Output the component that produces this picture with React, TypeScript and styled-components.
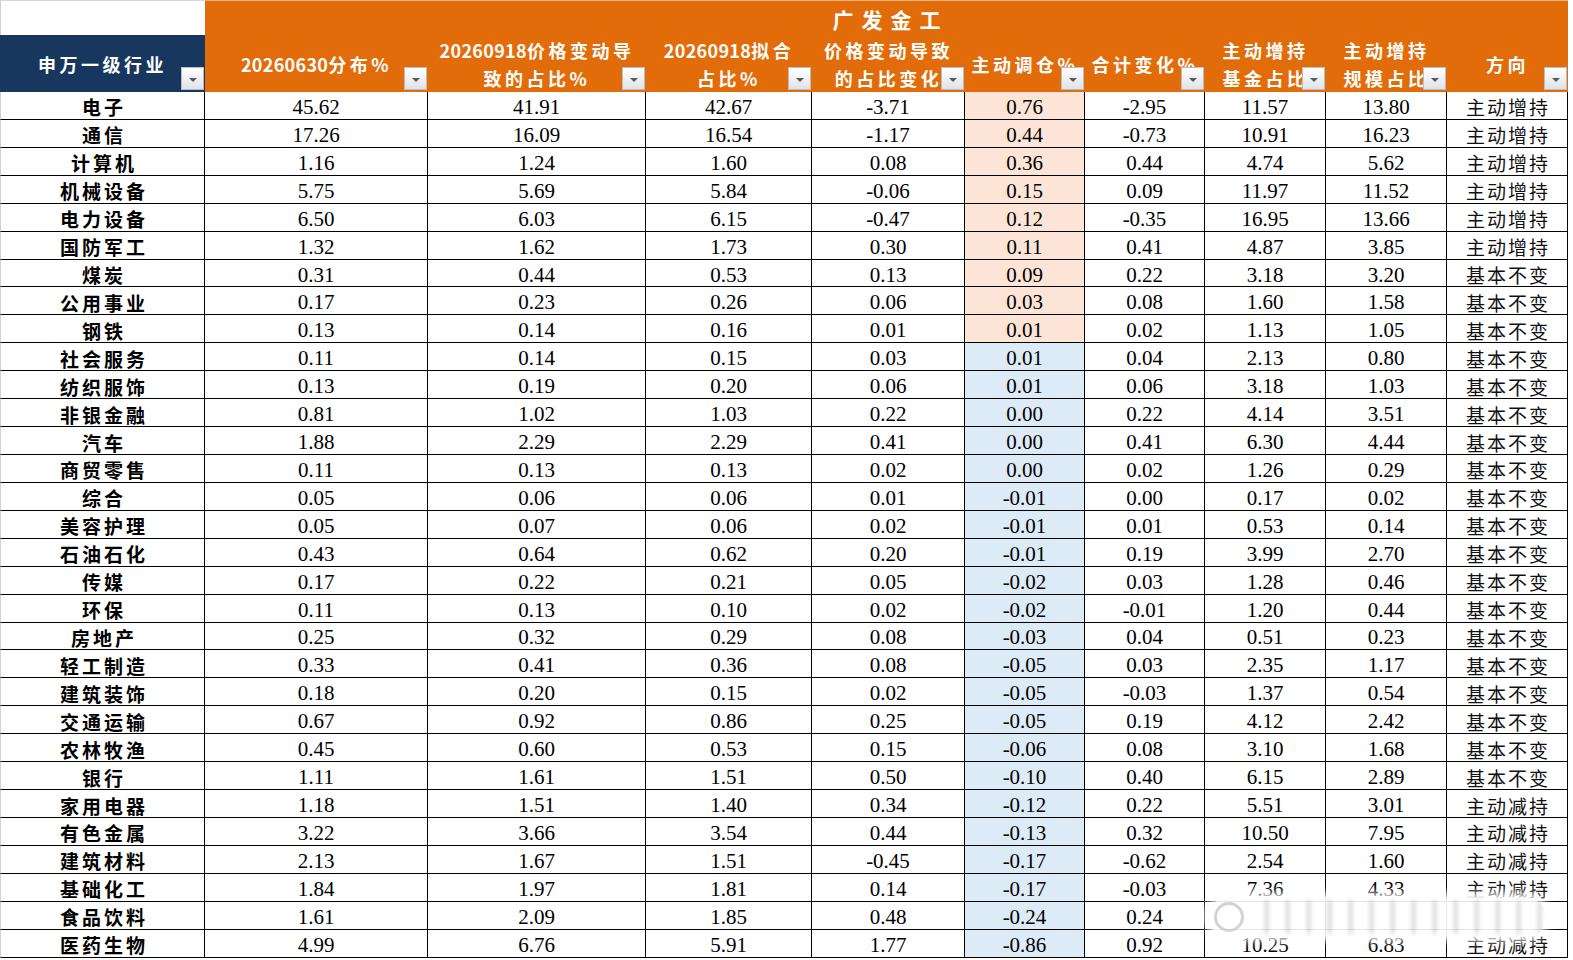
import React from "react";
import styled, { createGlobalStyle } from "styled-components";

const GlobalStyle = createGlobalStyle`
  html, body {
    margin: 0;
    padding: 0;
    background: #ffffff;
  }
  * {
    box-sizing: border-box;
  }
`;

const COLORS = {
  orange: "#e36c0a",
  navy: "#17375e",
  peach: "#fce4d6",
  blue: "#ddebf7",
  line: "#000000",
};

const CJK = `"Noto Sans CJK SC", "Noto Sans", sans-serif`;
const NUM = `"Liberation Serif", "Noto Sans CJK SC", serif`;

const Page = styled.div`
  position: relative;
  width: 1573px;
  height: 960px;
  overflow: hidden;
  background: #ffffff;
`;

const Sheet = styled.div`
  display: grid;
  grid-template-columns: 205px 223px 218px 166px 153px 120px 120px 121px 121px 121px;
  grid-template-rows: 35px 57px repeat(31, 27.93px);
`;

const BlankCorner = styled.div`
  background: #ffffff;
  border-top: 1px solid #d8d8d8;
  border-left: 1px solid #d0d0d0;
`;

const TitleCell = styled.div`
  grid-column: 2 / span 9;
  background: ${COLORS.orange};
  border-top: 1px solid #f2b27a;
  display: flex;
  align-items: center;
  justify-content: center;
  color: #ffffff;
  font-family: ${CJK};
  font-weight: 700;
  font-size: 21px;
  letter-spacing: 8px;
  padding-left: 8px;
  padding-top: 1px;
`;

const HeadCell = styled.div<{ $navy?: boolean }>`
  position: relative;
  background: ${(p) => (p.$navy ? COLORS.navy : COLORS.orange)};
  display: flex;
  flex-direction: column;
  align-items: center;
  justify-content: center;
  color: #ffffff;
  font-family: ${CJK};
  font-weight: 700;
  font-size: 18px;
  line-height: 28px;
  letter-spacing: 3.5px;
  white-space: nowrap;
  padding-top: 1px;
`;

const HeadLine = styled.span`
  display: block;
`;

const Digits = styled.span`
  letter-spacing: 0.3px;
`;

const FilterButton = styled.div`
  position: absolute;
  right: 1px;
  bottom: 2px;
  width: 23px;
  height: 23px;
  background: linear-gradient(#ffffff, #dfe3e8);
  border: 1px solid #b9bec6;
  display: flex;
  align-items: center;
  justify-content: center;
  &::after {
    content: "";
    border-left: 4px solid transparent;
    border-right: 4px solid transparent;
    border-top: 4px solid #5a5a5a;
    margin-top: 2px;
  }
`;

const Cell = styled.div<{ $fill?: string }>`
  display: flex;
  align-items: center;
  justify-content: center;
  background: ${(p) => p.$fill || "#ffffff"};
  border-right: 1px solid ${COLORS.line};
  border-bottom: 1px solid ${COLORS.line};
  color: #000000;
  font-family: ${NUM};
  font-size: 21px;
  white-space: nowrap;
  padding-top: 4px;
`;

const NameCell = styled(Cell)`
  border-left: 1px solid #d0d0d0;
  font-family: ${CJK};
  font-weight: 700;
  font-size: 19px;
  letter-spacing: 3px;
  padding-left: 3px;
  padding-top: 3px;
`;

const DirCell = styled(Cell)`
  font-family: ${CJK};
  font-weight: 400;
  font-size: 19px;
  letter-spacing: 2px;
  padding-left: 2px;
  padding-top: 3px;
  color: #111111;
`;

const Watermark = styled.div`
  position: absolute;
  left: 1208px;
  top: 897px;
  width: 338px;
  height: 40px;
  border-radius: 20px;
  background: rgba(255, 255, 255, 0.9);
  box-shadow: 0 0 8px 4px rgba(255, 255, 255, 0.9);
  overflow: hidden;
  display: flex;
  align-items: center;
  gap: 12px;
  padding-left: 6px;
`;

const WatermarkLogo = styled.div`
  width: 30px;
  height: 30px;
  border-radius: 50%;
  border: 3px solid rgba(200, 200, 200, 0.8);
  flex-shrink: 0;
`;

const WatermarkText = styled.div`
  flex: 1;
  height: 34px;
  filter: blur(2px);
  background: repeating-linear-gradient(
    90deg,
    rgba(255, 255, 255, 0) 0px,
    rgba(255, 255, 255, 0) 9px,
    rgba(90, 90, 90, 0.45) 10px,
    rgba(255, 255, 255, 0) 13px,
    rgba(255, 255, 255, 0) 21px
  );
`;

type Row = [string, string, string, string, string, string, string, string, string, string];

const rows: Row[] = [
  ["电子", "45.62", "41.91", "42.67", "-3.71", "0.76", "-2.95", "11.57", "13.80", "主动增持"],
  ["通信", "17.26", "16.09", "16.54", "-1.17", "0.44", "-0.73", "10.91", "16.23", "主动增持"],
  ["计算机", "1.16", "1.24", "1.60", "0.08", "0.36", "0.44", "4.74", "5.62", "主动增持"],
  ["机械设备", "5.75", "5.69", "5.84", "-0.06", "0.15", "0.09", "11.97", "11.52", "主动增持"],
  ["电力设备", "6.50", "6.03", "6.15", "-0.47", "0.12", "-0.35", "16.95", "13.66", "主动增持"],
  ["国防军工", "1.32", "1.62", "1.73", "0.30", "0.11", "0.41", "4.87", "3.85", "主动增持"],
  ["煤炭", "0.31", "0.44", "0.53", "0.13", "0.09", "0.22", "3.18", "3.20", "基本不变"],
  ["公用事业", "0.17", "0.23", "0.26", "0.06", "0.03", "0.08", "1.60", "1.58", "基本不变"],
  ["钢铁", "0.13", "0.14", "0.16", "0.01", "0.01", "0.02", "1.13", "1.05", "基本不变"],
  ["社会服务", "0.11", "0.14", "0.15", "0.03", "0.01", "0.04", "2.13", "0.80", "基本不变"],
  ["纺织服饰", "0.13", "0.19", "0.20", "0.06", "0.01", "0.06", "3.18", "1.03", "基本不变"],
  ["非银金融", "0.81", "1.02", "1.03", "0.22", "0.00", "0.22", "4.14", "3.51", "基本不变"],
  ["汽车", "1.88", "2.29", "2.29", "0.41", "0.00", "0.41", "6.30", "4.44", "基本不变"],
  ["商贸零售", "0.11", "0.13", "0.13", "0.02", "0.00", "0.02", "1.26", "0.29", "基本不变"],
  ["综合", "0.05", "0.06", "0.06", "0.01", "-0.01", "0.00", "0.17", "0.02", "基本不变"],
  ["美容护理", "0.05", "0.07", "0.06", "0.02", "-0.01", "0.01", "0.53", "0.14", "基本不变"],
  ["石油石化", "0.43", "0.64", "0.62", "0.20", "-0.01", "0.19", "3.99", "2.70", "基本不变"],
  ["传媒", "0.17", "0.22", "0.21", "0.05", "-0.02", "0.03", "1.28", "0.46", "基本不变"],
  ["环保", "0.11", "0.13", "0.10", "0.02", "-0.02", "-0.01", "1.20", "0.44", "基本不变"],
  ["房地产", "0.25", "0.32", "0.29", "0.08", "-0.03", "0.04", "0.51", "0.23", "基本不变"],
  ["轻工制造", "0.33", "0.41", "0.36", "0.08", "-0.05", "0.03", "2.35", "1.17", "基本不变"],
  ["建筑装饰", "0.18", "0.20", "0.15", "0.02", "-0.05", "-0.03", "1.37", "0.54", "基本不变"],
  ["交通运输", "0.67", "0.92", "0.86", "0.25", "-0.05", "0.19", "4.12", "2.42", "基本不变"],
  ["农林牧渔", "0.45", "0.60", "0.53", "0.15", "-0.06", "0.08", "3.10", "1.68", "基本不变"],
  ["银行", "1.11", "1.61", "1.51", "0.50", "-0.10", "0.40", "6.15", "2.89", "基本不变"],
  ["家用电器", "1.18", "1.51", "1.40", "0.34", "-0.12", "0.22", "5.51", "3.01", "主动减持"],
  ["有色金属", "3.22", "3.66", "3.54", "0.44", "-0.13", "0.32", "10.50", "7.95", "主动减持"],
  ["建筑材料", "2.13", "1.67", "1.51", "-0.45", "-0.17", "-0.62", "2.54", "1.60", "主动减持"],
  ["基础化工", "1.84", "1.97", "1.81", "0.14", "-0.17", "-0.03", "7.36", "4.33", "主动减持"],
  ["食品饮料", "1.61", "2.09", "1.85", "0.48", "-0.24", "0.24", "", "", ""],
  ["医药生物", "4.99", "6.76", "5.91", "1.77", "-0.86", "0.92", "10.25", "6.83", "主动减持"],
];

const headers: string[][] = [
  ["申万一级行业"],
  ["20260630分布%"],
  ["20260918价格变动导", "致的占比%"],
  ["20260918拟合", "占比%"],
  ["价格变动导致", "的占比变化"],
  ["主动调仓%"],
  ["合计变化%"],
  ["主动增持", "基金占比"],
  ["主动增持", "规模占比"],
  ["方向"],
];

// digits in the header are not spaced out like the Chinese characters
const renderHeadText = (text: string) =>
  text.split(/(\d+)/).map((part, i) =>
    /^\d+$/.test(part) ? <Digits key={i}>{part}</Digits> : <React.Fragment key={i}>{part}</React.Fragment>
  );

export default function App() {
  return (
    <Page>
      <GlobalStyle />
      <Sheet>
        <BlankCorner />
        <TitleCell>广发金工</TitleCell>
        {headers.map((lines, i) => (
          <HeadCell key={i} $navy={i === 0}>
            {lines.map((l) => (
              <HeadLine key={l}>{renderHeadText(l)}</HeadLine>
            ))}
            <FilterButton />
          </HeadCell>
        ))}
        {rows.map((r, ri) => (
          <React.Fragment key={r[0]}>
            <NameCell>{r[0]}</NameCell>
            {r.slice(1, 9).map((v, ci) => (
              <Cell
                key={ci}
                $fill={ci === 4 ? (ri < 9 ? COLORS.peach : COLORS.blue) : undefined}
              >
                {v}
              </Cell>
            ))}
            <DirCell>{r[9]}</DirCell>
          </React.Fragment>
        ))}
      </Sheet>
      <Watermark>
        <WatermarkLogo />
        <WatermarkText />
      </Watermark>
    </Page>
  );
}
